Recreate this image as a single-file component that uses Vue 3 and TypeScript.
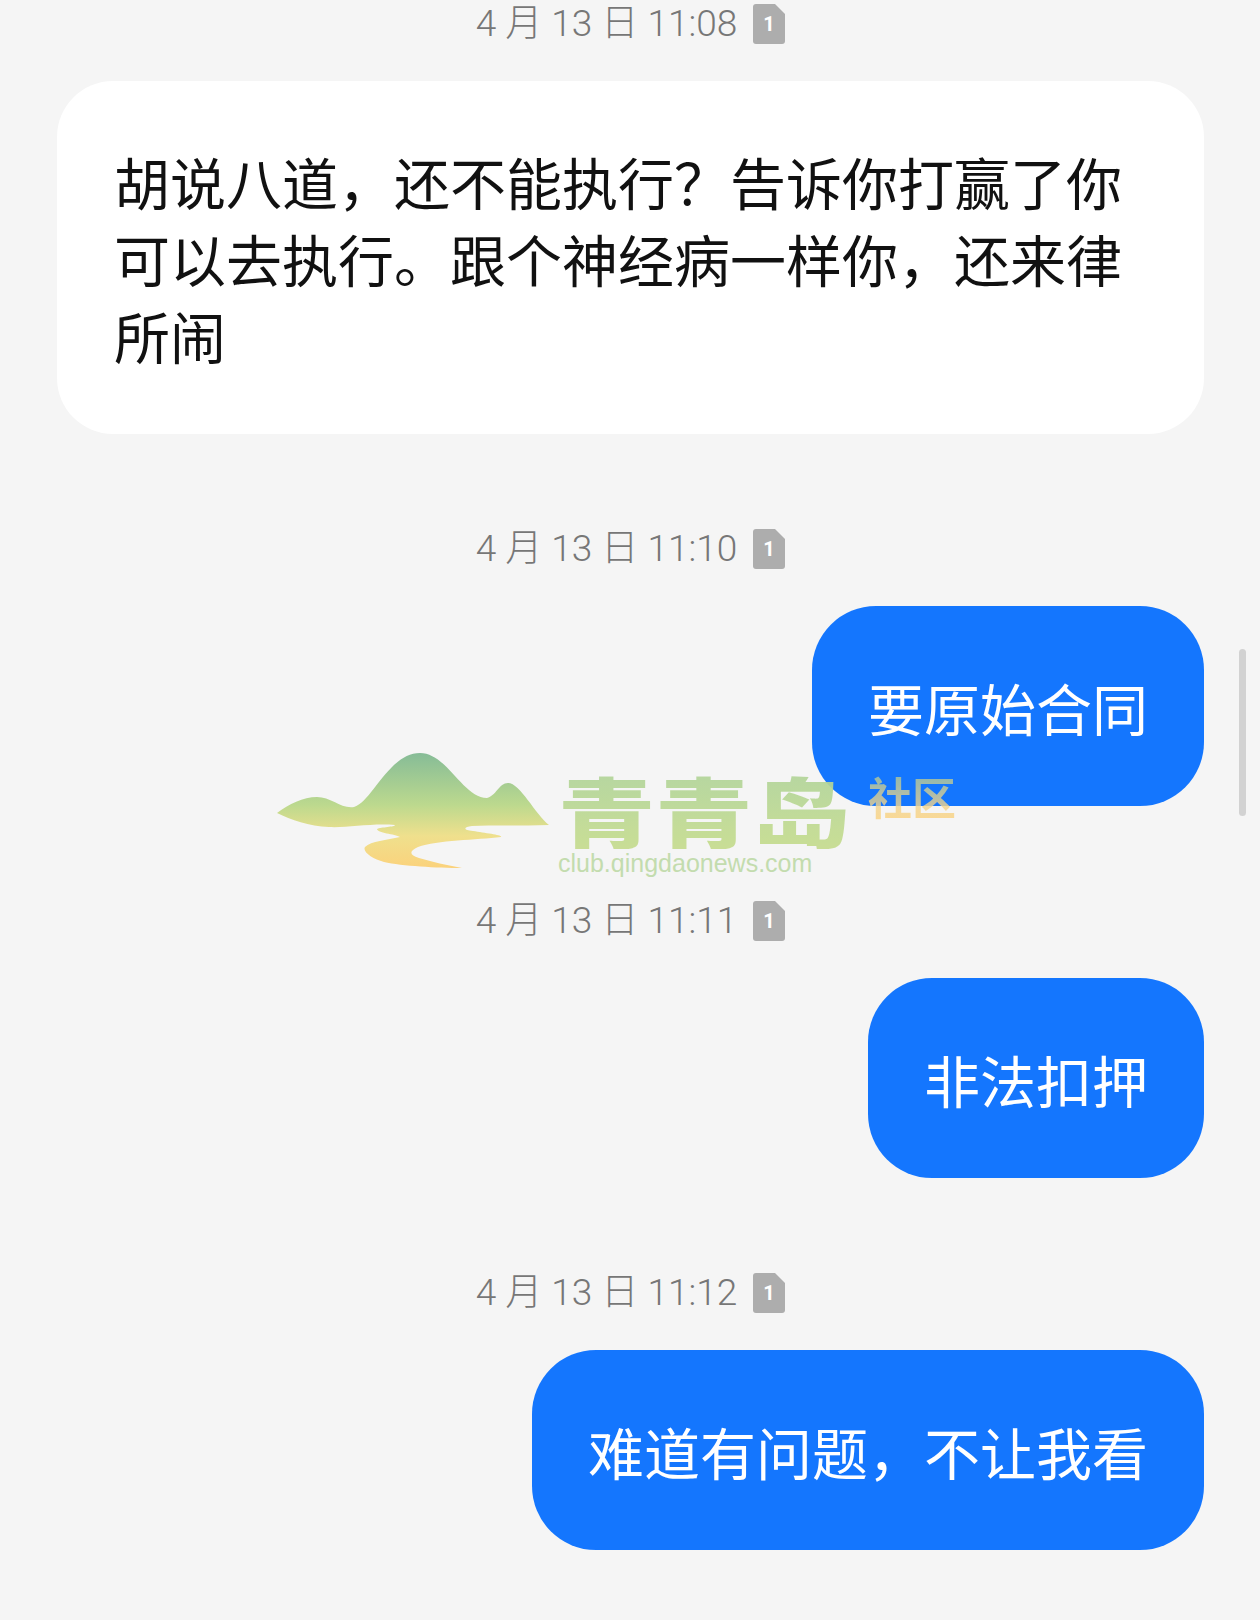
<script setup lang="ts">
interface Message {
  time: string
  text: string
  mine: boolean
}

const messages: Message[] = [
  { time: '4 月 13 日 11:08', text: '胡说八道，还不能执行？告诉你打赢了你可以去执行。跟个神经病一样你，还来律所闹', mine: false },
  { time: '4 月 13 日 11:10', text: '要原始合同', mine: true },
  { time: '4 月 13 日 11:11', text: '非法扣押', mine: true },
  { time: '4 月 13 日 11:12', text: '难道有问题，不让我看', mine: true },
]
</script>

<template>
  <div class="page">
    <section v-for="m in messages" :key="m.time" class="group">
      <div class="stamp">
        <span class="time">{{ m.time }}</span>
        <svg class="sim" width="32" height="40" viewBox="0 0 32 40">
          <path d="M3 0H22L32 10V37a3 3 0 0 1-3 3H3a3 3 0 0 1-3-3V3a3 3 0 0 1 3-3Z" fill="#adadad" />
          <text x="16" y="27" text-anchor="middle" class="sim-no">1</text>
        </svg>
      </div>
      <div class="bubble" :class="{ mine: m.mine }">{{ m.text }}</div>
    </section>

    <div class="scrollbar"></div>

    <!-- community mark laid over the conversation -->
    <div class="mark">
      <svg class="hills" width="272" height="116" viewBox="0 0 272 116">
        <defs>
          <linearGradient id="hillFill" x1="0" y1="0" x2="0" y2="1">
            <stop offset="0" stop-color="#86bc97" />
            <stop offset="0.45" stop-color="#bcd98e" />
            <stop offset="0.72" stop-color="#efe08d" />
            <stop offset="1" stop-color="#fbd27c" />
          </linearGradient>
        </defs>
        <path
          fill="url(#hillFill)"
          d="M0 61C12 52 26 45 40 45C54 45 64 57 77 55C95 50 112 1 143 1C170 1 186 46 210 46C219 44 222 31 231 31C243 31 258 62 272 73C245 74 215 73 195 74C186 75 186 78 196 79C208 81 226 83 224 85C200 88 160 88 141 95C132 99 132 103 142 106C155 110 170 113 185 116C160 116 125 114 107 110C96 107 85 100 88 95C94 89 110 88 123 85C118 82 100 81 100 77C104 75 118 75 118 73C95 71 70 76 52 75C32 74 14 68 0 61Z"
        />
      </svg>
      <div class="brand">
        <div class="brand-row">
          <span class="brand-name">青青岛</span>
          <span class="brand-sub">社区</span>
        </div>
        <span class="brand-url">club.qingdaonews.com</span>
      </div>
    </div>
  </div>
</template>

<style scoped>
.page {
  position: relative;
  width: 1260px;
  height: 1620px;
  box-sizing: border-box;
  padding: 4px 56px 0 57px;
  background: #f5f5f5;
  overflow: hidden;
  display: flex;
  flex-direction: column;
  gap: 95px;
  font-family: "Noto Sans CJK SC", "Noto Sans", sans-serif;
}

.group {
  display: flex;
  flex-direction: column;
  gap: 37px;
}

.stamp {
  display: flex;
  justify-content: center;
  align-items: center;
  gap: 16px;
  height: 40px;
}

.time {
  font-family: Roboto, "Noto Sans CJK SC", sans-serif;
  font-size: 37px;
  font-weight: 300;
  line-height: 40px;
  color: #777;
  white-space: nowrap;
}

.sim-no {
  font-family: Roboto, sans-serif;
  font-size: 20px;
  font-weight: 700;
  fill: #fff;
}

.bubble {
  align-self: stretch;
  box-sizing: border-box;
  padding: 61px 57px;
  border-radius: 56px;
  background: #fff;
  color: #111;
  font-size: 56px;
  line-height: 77px;
}

.bubble.mine {
  align-self: flex-end;
  padding: 61.5px 56px;
  border-radius: 64px;
  background: #1476fe;
  color: #fff;
}

.scrollbar {
  position: absolute;
  left: 1239px;
  top: 649px;
  width: 7px;
  height: 167px;
  border-radius: 4px;
  background: #d2d2d2;
}

.mark {
  position: absolute;
  left: 277px;
  top: 752px;
  display: flex;
  gap: 9px;
  pointer-events: none;
}

.hills {
  display: block;
}

.brand {
  display: flex;
  flex-direction: column;
  padding-top: 17px;
}

.brand-row {
  display: flex;
  height: 80px;
  align-items: center;
  gap: 19px;
}

.brand-name {
  display: block;
  width: 291px;
  font-size: 76px;
  font-weight: 900;
  line-height: 80px;
  white-space: nowrap;
  transform: scaleX(1.28);
  transform-origin: left center;
  background: linear-gradient(#b0d49a, #c6dc8e);
  background-clip: text;
  -webkit-background-clip: text;
  color: transparent;
  opacity: 0.92;
}

.brand-sub {
  font-size: 44px;
  font-weight: 700;
  line-height: 48px;
  margin-top: -26px;
  background: linear-gradient(#a9c79a, #f2d48e 70%, #fbd27c);
  background-clip: text;
  -webkit-background-clip: text;
  color: transparent;
  opacity: 0.8;
}

.brand-url {
  font-family: "Liberation Sans", sans-serif;
  font-size: 25px;
  line-height: 28px;
  color: #c3dcae;
}
</style>

<style>
body {
  background: #f5f5f5;
}
</style>
